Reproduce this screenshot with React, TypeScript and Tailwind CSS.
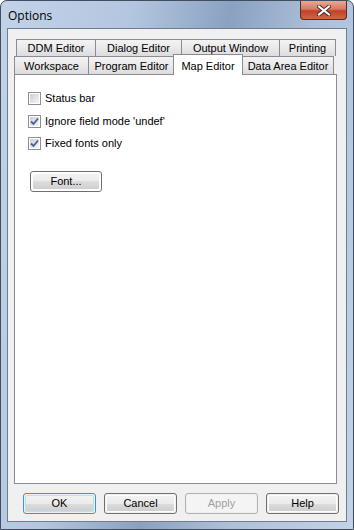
import React from "react";

const font = { fontFamily: '"Liberation Sans", Arial, sans-serif' };

function Tab({ label, w }: { label: string; w: string }) {
  return (
    <div
      className={`${w} -mr-px flex items-center justify-center pt-px border border-b-0 border-[#898c95] text-[11px] text-black bg-[linear-gradient(#f3f3f3,#e9e9e9_50%,#dcdcdc)]`}
    >
      {label}
    </div>
  );
}

function Check({ checked, label }: { checked?: boolean; label: string }) {
  return (
    <div className="flex items-center h-[13px]">
      <div className="w-[13px] h-[13px] border border-[#8e8f8f] bg-white p-px">
        <div className="w-full h-full bg-[linear-gradient(135deg,#cbcfd5,#f6f6f6)] flex items-center justify-center">
          {checked && (
            <svg width="9" height="9" viewBox="0 0 9 9">
              <path d="M1 4.5 L3.5 7 L8 1.5" fill="none" stroke="#4a5f97" strokeWidth="1.8" />
            </svg>
          )}
        </div>
      </div>
      <span className="ml-[4px] text-[11px] text-black leading-none">{label}</span>
    </div>
  );
}

function Btn({ label, def, disabled, w = "w-[73px]" }: { label: string; def?: boolean; disabled?: boolean; w?: string }) {
  return (
    <div
      className={`${w} h-[21px] rounded-[3px] border ${
        def ? "border-[#3c93d6]" : disabled ? "border-[#adb2b5]" : "border-[#707070]"
      } p-px`}
    >
      <div
        className={`w-full h-full rounded-[2px] flex items-center justify-center text-[11px] ${
          disabled
            ? "bg-[#f4f4f4] text-[#a0a0a0] border border-[#f4f4f4]"
            : def
            ? "bg-[linear-gradient(#f2f2f2,#ebebeb_50%,#dddddd_50%,#cfcfcf)] text-black border border-[#b5e2f8]"
            : "bg-[linear-gradient(#f2f2f2,#ebebeb_50%,#dddddd_50%,#cfcfcf)] text-black border border-[#fcfcfc]"
        }`}
      >
        {label}
      </div>
    </div>
  );
}

export default function App() {
  return (
    <div style={font} className="w-[354px] h-[530px] bg-white">
      <div className="w-[354px] h-[530px] rounded-t-[7px] border border-[#414e5f] flex flex-col bg-[linear-gradient(100deg,#c2d3e8_0%,#b3c6df_30%,#8aa1c1_52%,#adc0da_72%,#c2d3e8_100%)]">
        <div className="h-[27px] flex items-start relative">
          <span
            className="ml-[7px] mt-[6px] text-[12px] text-black"
            style={{ fontFamily: '"Open Sans", "Noto Sans", sans-serif' }}
          >
            Options
          </span>
          <div className="absolute left-[299px] top-0 w-[47px] h-[19px] rounded-b-[4px] border border-t-0 border-[#5b2a24] bg-[linear-gradient(#e9a898,#d47a62_45%,#c0412a_55%,#d4663f)] flex items-center justify-center">
            <svg width="14" height="11" viewBox="0 0 14 11">
              <path d="M2 1.5 L12 9.5 M12 1.5 L2 9.5" stroke="#4a2a28" strokeWidth="4" strokeLinecap="square" />
              <path d="M2 1.5 L12 9.5 M12 1.5 L2 9.5" stroke="#ffffff" strokeWidth="2" strokeLinecap="square" />
            </svg>
          </div>
        </div>
        <div className="mx-[6px] mb-[7px] flex-1 border border-[#6f7d90] bg-[#f0f0f0] flex flex-col pt-[10px] px-[6px]">
          <div className="flex h-[17px] ml-[2px]">
            <Tab label="DDM Editor" w="w-[80px]" />
            <Tab label="Dialog Editor" w="w-[87px]" />
            <Tab label="Output Window" w="w-[99px]" />
            <Tab label="Printing" w="w-[57px]" />
          </div>
          <div className="flex h-[18px] items-end relative z-10">
            <Tab label="Workspace" w="w-[75px]" />
            <Tab label="Program Editor" w="w-[87px]" />
            <div className="w-[70px] h-[21px] -mx-px mb-[-1px] flex items-start justify-center pt-[3px] border border-b-0 border-[#898c95] bg-white text-[11px] text-black z-10 relative">
              Map Editor
            </div>
            <Tab label="Data Area Editor" w="w-[92px]" />
          </div>
          <div className="w-[323px] h-[410px] border border-[#898c95] bg-white flex flex-col items-start pl-[13px] pt-[17px]">
            <Check label="Status bar" />
            <div className="mt-[10px]">
              <Check checked label="Ignore field mode 'undef'" />
            </div>
            <div className="mt-[9px]">
              <Check checked label="Fixed fonts only" />
            </div>
            <div className="mt-[21px] ml-[2px]">
              <Btn label="Font..." w="w-[72px]" />
            </div>
          </div>
          <div className="flex mt-[9px] ml-[9px] gap-[8px]">
            <Btn label="OK" def />
            <Btn label="Cancel" />
            <Btn label="Apply" disabled />
            <Btn label="Help" />
          </div>
        </div>
      </div>
    </div>
  );
}
